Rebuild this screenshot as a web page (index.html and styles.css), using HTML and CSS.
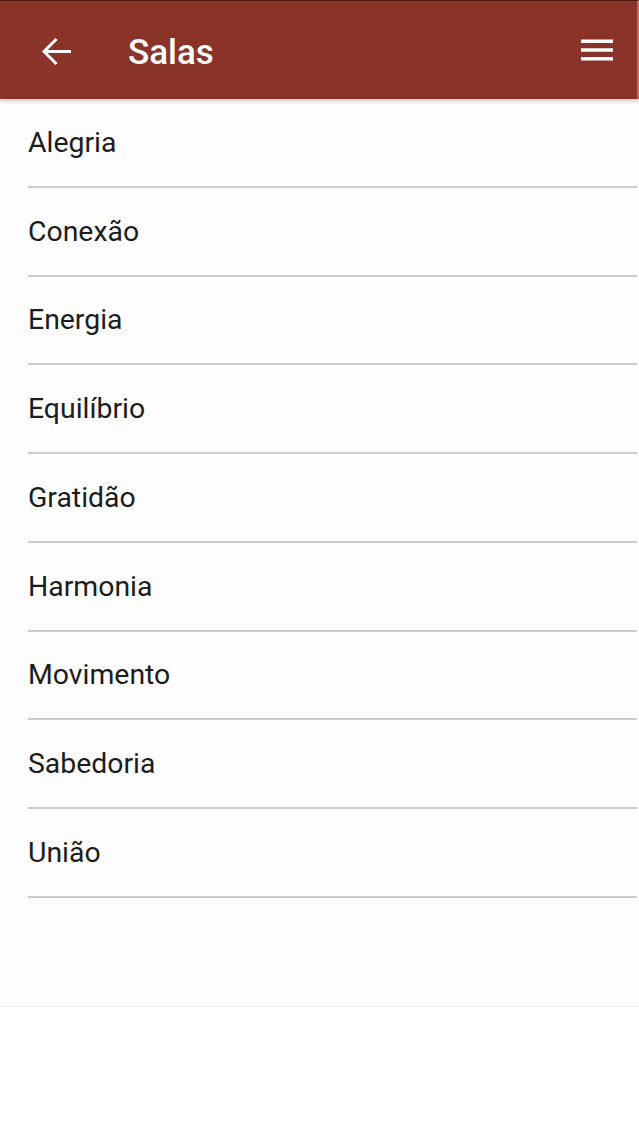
FILE: index.html
```html
<!DOCTYPE html>
<html lang="pt">
<head>
<meta charset="utf-8">
<title>Salas</title>
<link rel="stylesheet" href="styles.css">
</head>
<body>
<header class="appbar">
  <button class="icon-btn back" aria-label="Voltar">
    <svg width="32" height="30" viewBox="0 0 32 30">
      <path d="M30 15.5H3 M15.5 3L3 15.5L15.5 28" fill="none" stroke="#fff" stroke-width="3" stroke-linecap="butt" stroke-linejoin="miter"/>
    </svg>
  </button>
  <h1 class="title">Salas</h1>
  <button class="icon-btn menu" aria-label="Menu">
    <svg width="32" height="24" viewBox="0 0 32 24">
      <rect x="0" y="1.5" width="32" height="3.5" fill="#fff"/>
      <rect x="0" y="10.25" width="32" height="3.5" fill="#fff"/>
      <rect x="0" y="19" width="32" height="3.5" fill="#fff"/>
    </svg>
  </button>
</header>
<main class="content">
  <ul class="rooms">
    <li class="room">Alegria</li>
    <li class="room">Conexão</li>
    <li class="room">Energia</li>
    <li class="room">Equilíbrio</li>
    <li class="room">Gratidão</li>
    <li class="room">Harmonia</li>
    <li class="room">Movimento</li>
    <li class="room">Sabedoria</li>
    <li class="room">União</li>
  </ul>
</main>
</body>
</html>
```

FILE: styles.css
```css
html, body {
  margin: 0;
  padding: 0;
  background: #ffffff;
}
body {
  width: 639px;
  font-family: Roboto, "Noto Sans", "Liberation Sans", sans-serif;
  color: #1c1c1c;
}
.appbar {
  position: relative;
  z-index: 2;
  box-sizing: border-box;
  height: 99px;
  display: flex;
  align-items: center;
  background: #8a3329;
  border-top: 1px solid #4d1c16;
  border-right: 2px solid #c46a62;
  box-shadow: 0 2px 4px rgba(0, 0, 0, 0.22);
  padding: 0 24px 0 41px;
}
.icon-btn {
  background: none;
  border: 0;
  padding: 0;
  margin: 0;
  display: flex;
  align-items: center;
  justify-content: center;
  cursor: pointer;
}
.back {
  margin-top: 2px;
}
.title {
  margin: 4px 0 0 55px;
  font-size: 35px;
  font-weight: 500;
  color: #ffffff;
  letter-spacing: 0;
  flex: 1;
}
.menu {
  margin-top: -1px;
}
.content {
  box-sizing: border-box;
  height: 908px;
  background: #fdfdfd;
  border-bottom: 1px solid #ececec;
}
.rooms {
  list-style: none;
  margin: 0 2px 0 28px;
  padding: 0;
}
.room {
  box-sizing: border-box;
  height: 88.75px;
  display: flex;
  align-items: center;
  font-size: 28.4px;
  font-weight: 400;
  border-bottom: 2px solid #cccccc;
  padding-left: 0;
}
```
